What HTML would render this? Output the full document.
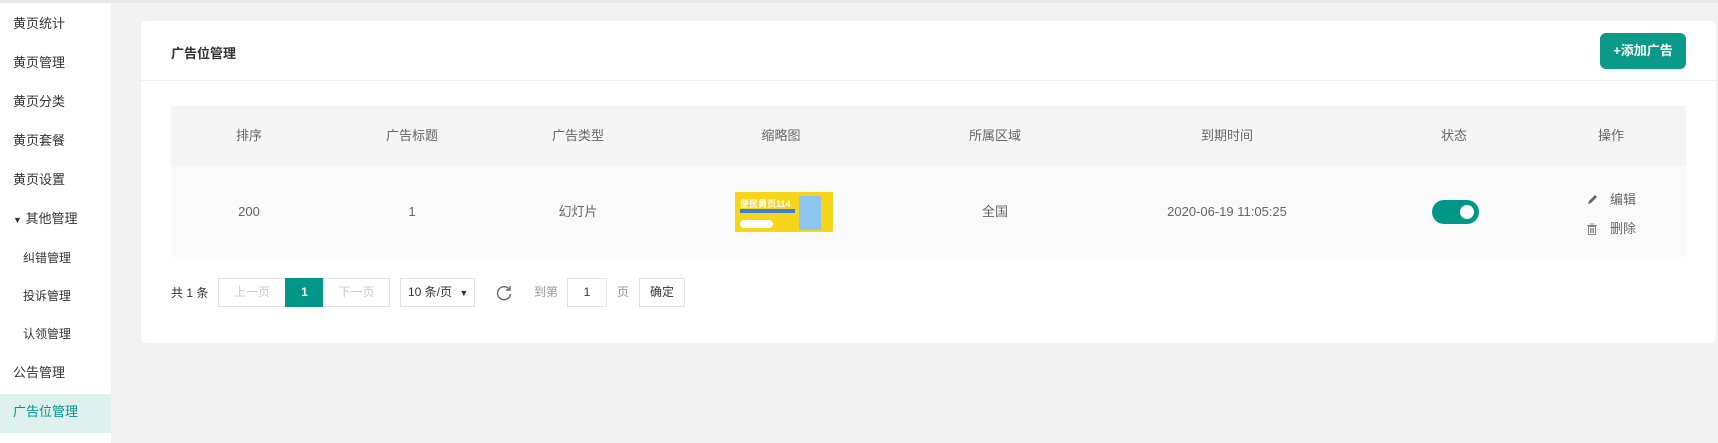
<!DOCTYPE html>
<html><head><meta charset="utf-8"><style>
*{margin:0;padding:0;box-sizing:border-box}
body{width:1718px;height:443px;background:#f2f2f2;font-family:"Liberation Sans","Noto Sans CJK SC",sans-serif;font-size:13px;color:#666;position:relative;overflow:hidden}
.top{position:absolute;left:0;top:0;width:1718px;height:3px;background:#e8e8e8}
.side{position:absolute;left:0;top:3px;width:111px;height:440px;background:#fff}
.si{position:absolute;left:13px;color:#333;font-size:13px;line-height:16px}
.sub{left:23px;font-size:12px}
.hl{position:absolute;left:0;top:391px;width:111px;height:39px;background:#dff1ee}
.card{position:absolute;left:141px;top:21px;width:1575px;height:322px;background:#fff;border-radius:5px}
.hdr{position:absolute;left:0;top:0;width:100%;height:60px;border-bottom:1px solid #f0f0f0}
.title{position:absolute;left:30px;top:22px;font-weight:bold;color:#333;font-size:13px}
.btn{position:absolute;left:1459px;top:12px;width:86px;height:36px;background:#0a9a8a;border-radius:6px;color:#fff;font-weight:bold;font-size:13px;text-align:center;line-height:36px}
.c{position:absolute;transform:translateX(-50%);white-space:nowrap;line-height:16px}
.th{position:absolute;left:30px;top:85px;width:1515px;height:60px;background:#f5f5f5}
.tr{position:absolute;left:30px;top:145px;width:1515px;height:91px;background:#fafafa}
.pg{position:absolute;top:257px;height:29px;border:1px solid #e2e2e2;line-height:27px;text-align:center;background:#fff;font-size:12px}
.lb{position:absolute;top:264px;line-height:16px;font-size:12px}
</style></head><body>
<div class="top"></div>
<div class="side">
<div class="hl"></div>
<div class="si" style="top:13px">黄页统计</div>
<div class="si" style="top:52px">黄页管理</div>
<div class="si" style="top:91px">黄页分类</div>
<div class="si" style="top:130px">黄页套餐</div>
<div class="si" style="top:169px">黄页设置</div>
<div class="si" style="top:208px"><span style="font-size:9px">▼</span> 其他管理</div>
<div class="si sub" style="top:247px">纠错管理</div>
<div class="si sub" style="top:285px">投诉管理</div>
<div class="si sub" style="top:323px">认领管理</div>
<div class="si" style="top:362px">公告管理</div>
<div class="si" style="top:401px;color:#009688">广告位管理</div>
</div>
<div class="card">
<div class="hdr"><div class="title">广告位管理</div><div class="btn">+添加广告</div></div>
<div class="th">
<span class="c" style="left:78px;top:22px">排序</span>
<span class="c" style="left:241px;top:22px">广告标题</span>
<span class="c" style="left:407px;top:22px">广告类型</span>
<span class="c" style="left:610px;top:22px">缩略图</span>
<span class="c" style="left:824px;top:22px">所属区域</span>
<span class="c" style="left:1056px;top:22px">到期时间</span>
<span class="c" style="left:1283px;top:22px">状态</span>
<span class="c" style="left:1440px;top:22px">操作</span>
</div>
<div class="tr">
<span class="c" style="left:78px;top:38px">200</span>
<span class="c" style="left:241px;top:38px">1</span>
<span class="c" style="left:407px;top:38px">幻灯片</span>
<div style="position:absolute;left:564px;top:26px;width:98px;height:40px;background:#f7d51a;overflow:hidden">
 <div style="position:absolute;left:5px;top:5px;font-size:9px;color:#fff;font-weight:bold">便民黄页114</div>
 <div style="position:absolute;left:5px;top:17px;width:55px;height:4px;background:#3a7fd0"></div>
 <div style="position:absolute;left:5px;top:28px;width:33px;height:8px;background:#fff;border-radius:4px"></div>
 <div style="position:absolute;left:64px;top:4px;width:22px;height:34px;background:#8ec5f0;border-radius:2px"></div>
</div>
<span class="c" style="left:824px;top:38px">全国</span>
<span class="c" style="left:1056px;top:38px">2020-06-19 11:05:25</span>
<div style="position:absolute;left:1261px;top:34px;width:47px;height:24px;background:#009688;border-radius:12px"><div style="position:absolute;right:5px;top:5px;width:14px;height:14px;border-radius:50%;background:#fff"></div></div>
<svg style="position:absolute;left:1415px;top:28px" width="12" height="12" viewBox="0 0 12 12"><path d="M2 10 L3 7 L9 1 L11 3 L5 9 Z" fill="#666"/></svg>
<span style="position:absolute;left:1439px;top:26px;line-height:16px">编辑</span>
<svg style="position:absolute;left:1415px;top:57px" width="12" height="12" viewBox="0 0 12 12"><path d="M1 2.5h10M4 1h4M2.5 3.5h7v8h-7zM4.5 5v5M6 5v5M7.5 5v5" stroke="#888" fill="none" stroke-width="1"/></svg>
<span style="position:absolute;left:1439px;top:55px;line-height:16px">删除</span>
</div>
<span class="lb" style="left:30px;color:#333">共 1 条</span>
<div class="pg" style="left:77px;width:68px;color:#ccc">上一页</div>
<div class="pg" style="left:144px;width:39px;background:#009688;border-color:#009688;color:#fff;font-weight:bold">1</div>
<div class="pg" style="left:182px;width:67px;color:#ccc">下一页</div>
<div class="pg" style="left:259px;width:75px;color:#333;text-align:left;padding-left:7px">10 条/页 <span style="font-size:9px;margin-left:4px">▼</span></div>
<svg style="position:absolute;left:354px;top:263px" width="18" height="18" viewBox="0 0 18 18"><path d="M14 5 A6.5 6.5 0 1 0 15.5 10" stroke="#666" stroke-width="1.4" fill="none"/><path d="M15 2 L15 6 L11 6" stroke="#666" stroke-width="1.4" fill="none"/></svg>
<span class="lb" style="left:393px;color:#999;top:263px">到第</span>
<div class="pg" style="left:426px;width:40px;color:#333">1</div>
<span class="lb" style="left:476px;color:#999;top:263px">页</span>
<div class="pg" style="left:498px;width:46px;color:#333">确定</div>
</div>
</body></html>
